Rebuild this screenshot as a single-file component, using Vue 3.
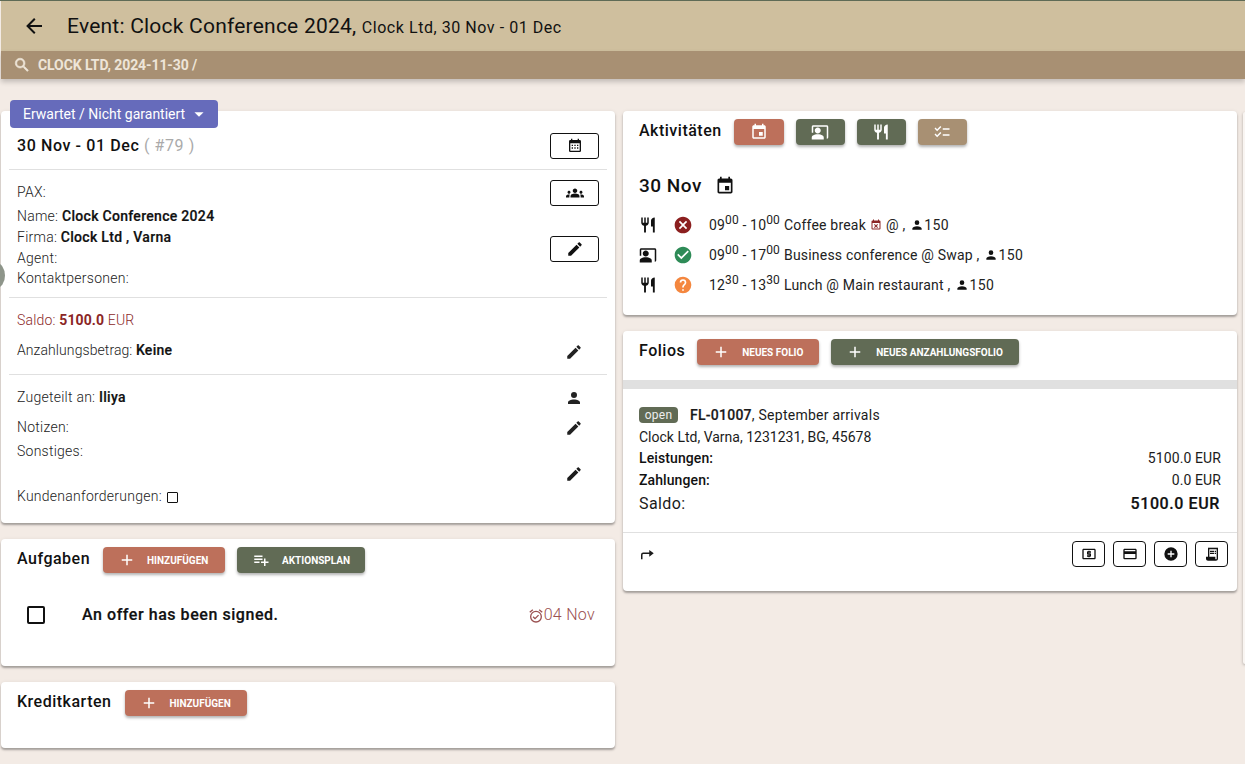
<script setup>
const P = {
  back: 'M20,11V13H8L13.5,18.5L12.08,19.92L4.16,12L12.08,4.08L13.5,5.5L8,11H20Z',
  search: 'M9.5,3A6.5,6.5 0 0,1 16,9.5C16,11.11 15.41,12.59 14.44,13.73L14.71,14H15.5L20.5,19L19,20.5L14,15.5V14.71L13.73,14.44C12.59,15.41 11.11,16 9.5,16A6.5,6.5 0 0,1 3,9.5A6.5,6.5 0 0,1 9.5,3M9.5,5C7,5 5,7 5,9.5C5,12 7,14 9.5,14C12,14 14,12 14,9.5C14,7 12,5 9.5,5Z',
  down: 'M7,10L12,15L17,10H7Z',
  month: 'M19 3h-1V1h-2v2H8V1H6v2H5a2 2 0 0 0-2 2v14a2 2 0 0 0 2 2h14a2 2 0 0 0 2-2V5a2 2 0 0 0-2-2zM5 8h14v11H5zM7 10v2h2v-2zM11 10v2h2v-2zM15 10v2h2v-2zM7 14v2h2v-2zM11 14v2h2v-2zM15 14v2h2v-2z',
  group: 'M4,13c1.1,0,2-0.9,2-2c0-1.1-0.9-2-2-2s-2,0.9-2,2C2,12.1,2.9,13,4,13z M5.13,14.1C4.76,14.04,4.39,14,4,14 c-0.99,0-1.93,0.21-2.78,0.58C0.48,14.9,0,15.62,0,16.43V18l4.5,0v-1.61C4.5,15.56,4.73,14.78,5.13,14.1z M20,13c1.1,0,2-0.9,2-2 c0-1.1-0.9-2-2-2s-2,0.9-2,2C18,12.1,18.9,13,20,13z M24,16.43c0-0.81-0.48-1.53-1.22-1.85C21.93,14.21,20.99,14,20,14 c-0.39,0-0.76,0.04-1.13,0.1c0.4,0.68,0.63,1.46,0.63,2.29V18l4.5,0V16.43z M16.24,13.65c-1.17-0.52-2.61-0.9-4.24-0.9 c-1.63,0-3.07,0.39-4.24,0.9C6.68,14.13,6,15.21,6,16.39V18h12v-1.61C18,15.21,17.32,14.13,16.24,13.65z M12,12c1.66,0,3-1.34,3-3 s-1.34-3-3-3S9,7.34,9,9S10.34,12,12,12z',
  pencil: 'M20.71,7.04C21.1,6.65 21.1,6 20.71,5.63L18.37,3.29C18,2.9 17.35,2.9 16.96,3.29L15.12,5.12L18.87,8.87M3,17.25V21H6.75L17.81,9.93L14.06,6.18L3,17.25Z',
  account: 'M12,4A4,4 0 0,1 16,8A4,4 0 0,1 12,12A4,4 0 0,1 8,8A4,4 0 0,1 12,4M12,14C16.42,14 20,15.79 20,18V20H4V18C4,15.79 7.58,14 12,14Z',
  food: 'M11,9H9V2H7V9H5V2H3V9C3,11.12 4.66,12.84 6.75,12.97V22H9.25V12.97C11.34,12.84 13,11.12 13,9V2H11V9M16,6V14H18.5V22H21V2C18.24,2 16,4.24 16,6Z',
  event: 'M17 12h-5v5h5v-5zM16 1v2H8V1H6v2H5c-1.11 0-1.99.9-1.99 2L3 19c0 1.1.89 2 2 2h14c1.1 0 2-.9 2-2V5c0-1.1-.9-2-2-2h-1V1h-2zm3 18H5V8h14v11z',
  present: 'M21 3H3c-1.1 0-2 .9-2 2v8h2V5h18v16c1.1 0 2-.9 2-2V5c0-1.1-.9-2-2-2zM9 14c2.21 0 4-1.79 4-4s-1.79-4-4-4-4 1.79-4 4 1.79 4 4 4zm6.39 2.56C13.71 15.7 11.53 15 9 15s-4.71.7-6.39 1.56C1.61 17.07 1 18.1 1 19.22V22h16v-2.78c0-1.12-.61-2.15-1.61-2.66z',
  checklist: 'M22 7h-9v2h9V7zm0 8h-9v2h9v-2zM5.54 11 2 7.46l1.41-1.41 2.12 2.12 4.24-4.24 1.41 1.41L5.54 11zm0 8L2 15.46l1.41-1.41 2.12 2.12 4.24-4.24 1.41 1.41L5.54 19z',
  cross: 'M12,2C17.53,2 22,6.47 22,12C22,17.53 17.53,22 12,22C6.47,22 2,17.53 2,12C2,6.47 6.47,2 12,2M15.59,7L12,10.59L8.41,7L7,8.41L10.59,12L7,15.59L8.41,17L12,13.41L15.59,17L17,15.59L13.41,12L17,8.41L15.59,7Z',
  ok: 'M12 2C6.5 2 2 6.5 2 12S6.5 22 12 22 22 17.5 22 12 17.5 2 12 2M10 17L5 12L6.41 10.59L10 14.17L17.59 6.58L19 8L10 17Z',
  help: 'M15.07,11.25L14.17,12.17C13.45,12.89 13,13.5 13,15H11V14.5C11,13.39 11.45,12.39 12.17,11.67L13.41,10.41C13.78,10.05 14,9.55 14,9C14,7.89 13.1,7 12,7A2,2 0 0,0 10,9H8A4,4 0 0,1 12,5A4,4 0 0,1 16,9C16,9.88 15.64,10.67 15.07,11.25M13,19H11V17H13M12,2A10,10 0 0,0 2,12A10,10 0 0,0 12,22A10,10 0 0,0 22,12C22,6.47 17.5,2 12,2Z',
  calx: 'M19 3h-1V1h-2v2H8V1H6v2H5a2 2 0 0 0-2 2v14a2 2 0 0 0 2 2h14a2 2 0 0 0 2-2V5a2 2 0 0 0-2-2zm0 16H5V8h14zM9.41 10 8 11.41 10.59 14 8 16.59 9.41 18 12 15.41 14.59 18 16 16.59 13.41 14 16 11.41 14.59 10 12 12.59z',
  alarm: 'M10.54,14.53L8.41,12.41L7,13.82L10.53,17.35L16.53,11.35L15.12,9.94L10.54,14.53M12,20A7,7 0 0,1 5,13A7,7 0 0,1 12,6A7,7 0 0,1 19,13A7,7 0 0,1 12,20M12,4A9,9 0 0,0 3,13A9,9 0 0,0 12,22A9,9 0 0,0 21,13A9,9 0 0,0 12,4M7.88,3.39L6.6,1.86L2,5.71L3.29,7.24L7.88,3.39M22,5.72L17.4,1.86L16.11,3.39L20.71,7.25L22,5.72Z',
  plus: 'M19,13H13V19H11V13H5V11H11V5H13V11H19V13Z',
  plan: 'M3 16H10V14H3M18 14V10H16V14H12V16H16V20H18V16H22V14M14 6H3V8H14M14 10H3V12H14V10Z',
  turn: 'M15 6.5L21 11l-6 4.5V12H7a1 1 0 0 0-1 1v6H4v-6a3 3 0 0 1 3-3h8z',
  cash: 'M11 17h2v-1h1c.55 0 1-.45 1-1v-3c0-.55-.45-1-1-1h-3v-1h4V8h-2V7h-2v1h-1c-.55 0-1 .45-1 1v3c0 .55.45 1 1 1h3v1H9v2h2v1zm9-13H4c-1.11 0-1.99.89-1.99 2L2 18c0 1.11.89 2 2 2h16c1.11 0 2-.89 2-2V6c0-1.11-.89-2-2-2zm0 14H4V6h16v12z',
  card: 'M20,8H4V6H20M20,18H4V12H20M20,4H4C2.89,4 2,4.89 2,6V18A2,2 0 0,0 4,20H20A2,2 0 0,0 22,18V6C22,4.89 21.1,4 20,4Z',
  pluscircle: 'M17,13H13V17H11V13H7V11H11V7H13V11H17M12,2A10,10 0 0,0 2,12A10,10 0 0,0 12,22A10,10 0 0,0 22,12A10,10 0 0,0 12,2Z',
  receipt: 'M19.5 3.5L18 2l-1.5 1.5L15 2l-1.5 1.5L12 2l-1.5 1.5L9 2 7.5 3.5 6 2v14H3v3c0 1.66 1.34 3 3 3h12c1.66 0 3-1.34 3-3V2l-1.5 1.5zM19 19c0 .55-.45 1-1 1s-1-.45-1-1v-3H8V5h11v14zM9 7h6v2H9zm7 0h2v2h-2zm-7 3h6v2H9zm7 0h2v2h-2z'
}
const activities = [
  { icon: P.food, state: P.cross, color: '#8b1f1f', a: '09', am: '00', b: '10', bm: '00', name: 'Coffee break', cal: true, rest: '@ ,' },
  { icon: P.present, state: P.ok, color: '#2e8b57', a: '09', am: '00', b: '17', bm: '00', name: 'Business conference @ Swap ,', rest: '' },
  { icon: P.food, state: P.help, color: '#f4873f', a: '12', am: '30', b: '13', bm: '30', name: 'Lunch @ Main restaurant ,', rest: '' }
]
const activityButtons = [
  { icon: P.event, cls: 'terra', w: 'w50' },
  { icon: P.present, cls: 'moss', w: 'w49' },
  { icon: P.food, cls: 'moss', w: 'w49' },
  { icon: P.checklist, cls: 'sand', w: 'w49' }
]
const footIcons = [P.cash, P.card, P.pluscircle, P.receipt]
</script>

<template>
  <div class="page">
    <header class="top">
      <svg class="ic ic24 back" viewBox="0 0 24 24"><path :d="P.back" /></svg>
      <h1>Event: Clock Conference 2024, <small>Clock Ltd, 30 Nov - 01 Dec</small></h1>
    </header>
    <div class="crumb">
      <svg class="ic ic18 search" viewBox="0 0 24 24"><path :d="P.search" /></svg>
      <span>CLOCK LTD, 2024-11-30 /</span>
    </div>
    <span class="edge-dot"></span>

    <main class="columns">
      <div class="col">
        <section class="card main-card">
          <button class="status">Erwartet / Nicht garantiert <svg class="ic ic22" viewBox="0 0 24 24"><path :d="P.down" /></svg></button>
          <div class="block date-row">
            <div class="dates">30 Nov - 01 Dec <span>( #79 )</span></div>
            <button class="outline"><svg class="ic ic16" viewBox="0 0 24 24"><path :d="P.month" /></svg></button>
          </div>
          <div class="block info">
            <div class="lines">
              <p class="pax">PAX:</p>
              <p class="name">Name: <b>Clock Conference 2024</b></p>
              <p class="firm">Firma: <b>Clock Ltd , Varna</b></p>
              <p class="agent">Agent:</p>
              <p class="contact">Kontaktpersonen:</p>
            </div>
            <div class="info-actions">
              <button class="outline"><svg class="ic ic18" viewBox="0 0 24 24"><path :d="P.group" /></svg></button>
              <button class="outline"><svg class="ic ic18" viewBox="0 0 24 24"><path :d="P.pencil" /></svg></button>
            </div>
          </div>
          <div class="block money">
            <p class="saldo">Saldo: <b>5100.0</b> EUR</p>
            <div class="line-action"><p class="deposit">Anzahlungsbetrag: <b>Keine</b></p><svg class="ic ic18 low" viewBox="0 0 24 24"><path :d="P.pencil" /></svg></div>
          </div>
          <div class="block assign">
            <div class="line-action h22"><p>Zugeteilt an: <b>Iliya</b></p><svg class="ic ic18 person" viewBox="0 0 24 24"><path :d="P.account" /></svg></div>
            <div class="line-action notes"><p>Notizen:</p><svg class="ic ic18 low1" viewBox="0 0 24 24"><path :d="P.pencil" /></svg></div>
            <p class="misc">Sonstiges:</p>
            <div class="misc-edit"><svg class="ic ic18" viewBox="0 0 24 24"><path :d="P.pencil" /></svg></div>
            <p class="wishes">Kundenanforderungen: <i class="tick"></i></p>
          </div>
        </section>

        <section class="card tasks">
          <div class="head">
            <h2>Aufgaben</h2>
            <button class="btn terra"><svg class="ic ic18" viewBox="0 0 24 24"><path :d="P.plus" /></svg>HINZUFÜGEN</button>
            <button class="btn moss"><svg class="ic ic18" viewBox="0 0 24 24"><path :d="P.plan" /></svg>AKTIONSPLAN</button>
          </div>
          <div class="task">
            <i class="box"></i>
            <b>An offer has been signed.</b>
            <span class="due"><svg class="ic ic16" viewBox="0 0 24 24"><path :d="P.alarm" /></svg>04 Nov</span>
          </div>
        </section>

        <section class="card cards">
          <div class="head">
            <h2>Kreditkarten</h2>
            <button class="btn terra"><svg class="ic ic18" viewBox="0 0 24 24"><path :d="P.plus" /></svg>HINZUFÜGEN</button>
          </div>
        </section>
      </div>

      <div class="col">
        <section class="card activities">
          <div class="head">
            <h2>Aktivitäten</h2>
            <button v-for="(b, i) in activityButtons" :key="i" class="btn square" :class="[b.cls, b.w]"><svg class="ic ic18" viewBox="0 0 24 24"><path :d="b.icon" /></svg></button>
          </div>
          <div class="day">30 Nov <svg class="ic ic20" viewBox="0 0 24 24"><path :d="P.event" /></svg></div>
          <div v-for="(a, i) in activities" :key="i" class="activity">
            <svg class="ic ic18 kind" viewBox="0 0 24 24"><path :d="a.icon" /></svg>
            <svg class="ic ic20 state" viewBox="0 0 24 24" :style="{ fill: a.color }"><path :d="a.state" /></svg>
            <span class="time">{{ a.a }}<sup>{{ a.am }}</sup> - {{ a.b }}<sup>{{ a.bm }}</sup></span>
            <span class="what">{{ a.name }}</span>
            <svg v-if="a.cal" class="ic ic12 calx" viewBox="0 0 24 24"><path :d="P.calx" /></svg>
            <span v-if="a.rest" class="what">{{ a.rest }}</span>
            <svg class="ic ic14 guest" viewBox="0 0 24 24"><path :d="P.account" /></svg><span class="count">150</span>
          </div>
        </section>

        <section class="card folios">
          <div class="head">
            <h2>Folios</h2>
            <button class="btn terra new-folio"><svg class="ic ic18" viewBox="0 0 24 24"><path :d="P.plus" /></svg>NEUES FOLIO</button>
            <button class="btn moss new-deposit"><svg class="ic ic18" viewBox="0 0 24 24"><path :d="P.plus" /></svg>NEUES ANZAHLUNGSFOLIO</button>
          </div>
          <div class="band"></div>
          <div class="folio">
            <p class="fl"><span class="open">open</span><b>FL-01007</b>, September arrivals</p>
            <p class="addr">Clock Ltd, Varna, 1231231, BG, 45678</p>
            <p class="row med first"><span>Leistungen:</span><span>5100.0 EUR</span></p>
            <p class="row med"><span>Zahlungen:</span><span>0.0 EUR</span></p>
            <p class="row total"><span>Saldo:</span><b>5100.0 EUR</b></p>
          </div>
          <div class="foot">
            <svg class="ic ic18" viewBox="0 0 24 24"><path :d="P.turn" /></svg>
            <div class="foot-btns">
              <button v-for="(d, i) in footIcons" :key="i" class="outline small"><svg class="ic ic16" viewBox="0 0 24 24"><path :d="d" /></svg></button>
            </div>
          </div>
        </section>
      </div>
    </main>
    <span class="edge-right"></span>
  </div>
</template>

<style>
html, body { margin: 0; background: #f3ebe5; overflow: hidden; }
</style>

<style scoped>
* { box-sizing: border-box; }
.page { position: relative; width: 1245px; height: 764px; overflow: hidden; padding-left: 1px; background: #f3ebe5; border-top: 1px solid #5f6b56; font-family: Roboto, "Liberation Sans", sans-serif; font-size: 14px; color: #1b1b1b; letter-spacing: .1px; }
p, h1, h2 { margin: 0; font-weight: 400; }
button { font-family: inherit; cursor: pointer; padding: 0; }
b { font-weight: 700; }
.ic { display: block; flex: none; fill: currentColor; }
.ic12 { width: 12px; height: 12px; } .ic14 { width: 14px; height: 14px; } .ic16 { width: 16px; height: 16px; } .ic18 { width: 18px; height: 18px; } .ic20 { width: 20px; height: 20px; } .ic22 { width: 22px; height: 22px; } .ic24 { width: 24px; height: 24px; }

.top { height: 50px; background: #cfbf9e; display: flex; align-items: center; padding-left: 21px; color: #111; }
.back { margin-right: 21px; }
.top h1 { font-size: 21px; letter-spacing: .22px; line-height: 50px; margin-top: 1px; }
.top small { font-size: 16px; letter-spacing: .55px; }
.crumb { height: 28px; background: #a89073; display: flex; align-items: center; padding-left: 12px; gap: 7px; color: #eee5d8; font-size: 14px; font-weight: 700; letter-spacing: -.1px; box-shadow: 0 3px 5px rgba(0,0,0,.2); position: relative; }
.search { stroke: currentColor; stroke-width: .8px; }
.edge-dot { position: absolute; left: -12px; top: 262px; width: 17px; height: 25px; border-radius: 50%; background: #8e958a; z-index: 2; }
.edge-right { position: absolute; right: -2px; top: 111px; width: 4px; height: 552px; border-radius: 4px; background: #f9f5f2; box-shadow: 0 1px 3px rgba(0,0,0,.3); }

.columns { display: flex; gap: 8px; padding-top: 32px; align-items: flex-start; }
.col { width: 614px; display: flex; flex-direction: column; gap: 16px; }
.card { position: relative; background: #fff; border-radius: 4px; box-shadow: 0 2px 2px rgba(0,0,0,.28), 0 1px 4px rgba(0,0,0,.1); }

.head { display: flex; align-items: center; padding: 8px 16px 0; height: 34px; }
h2 { font-size: 16px; font-weight: 500; letter-spacing: .5px; color: #111; line-height: 24px; margin-top: -3px; white-space: nowrap; }
.btn { border: 0; height: 26px; border-radius: 4px; display: inline-flex; align-items: center; color: #fff; font-size: 10px; font-weight: 700; letter-spacing: 0; box-shadow: 0 2px 3px rgba(0,0,0,.3); white-space: nowrap; }
.terra { background: #bd705b; } .moss { background: #616b55; } .sand { background: #a89073; }
.btn .ic { margin: 0 11px 0 15px; }

.main-card { height: 412px; }
.status { position: absolute; left: 9px; top: -11px; width: 208px; height: 28px; border: 0; border-radius: 4px; background: #666bbb; color: #fff; font-size: 14px; letter-spacing: 0; display: flex; align-items: center; padding-left: 13px; gap: 3px; z-index: 1; }
.block { margin: 0 8px; padding: 0 8px; border-bottom: 1px solid #e0e0e0; }
.block:last-child { border-bottom: 0; }
.date-row { height: 59px; display: flex; justify-content: space-between; align-items: flex-start; padding: 22px 8px 0; }
.dates { font-size: 16px; font-weight: 500; letter-spacing: .6px; color: #111; line-height: 26px; }
.dates span { font-weight: 400; color: #aaa; }
.outline { width: 49px; height: 26px; background: #fff; border: 1px solid #111; border-radius: 3px; display: flex; align-items: center; justify-content: center; color: #111; }
.info { height: 128px; display: flex; justify-content: space-between; position: relative; }
.lines p { line-height: 20px; color: #222; font-weight: 300; letter-spacing: .25px; }
.lines b, .money b, .assign b { color: #111; font-weight: 500; letter-spacing: .3px; -webkit-text-stroke: .2px #111; }
.pax { padding-top: 12px; }
.name { padding-top: 4px; } .firm { padding-top: 1px; } .agent { padding-top: 1px; }
.info-actions { padding-top: 10px; display: flex; flex-direction: column; gap: 30px; }
.money { height: 77px; padding-top: 12px; }
.saldo { color: #8b2a2a; line-height: 20px; font-weight: 300; letter-spacing: .2px; }
.money .saldo b { color: #8b2626; -webkit-text-stroke: 0; font-weight: 700; letter-spacing: .1px; }
.line-action { display: flex; justify-content: space-between; align-items: center; padding-right: 16px; color: #222; }
.money .line-action { margin-top: 8px; height: 24px; }
.deposit { font-weight: 300; letter-spacing: .08px; margin-top: -1px; }
.low { margin-top: 3px; }
.low1 { margin-top: 2px; }
.assign { height: 148px; padding-top: 11px; }
.assign p { color: #222; line-height: 20px; font-weight: 300; letter-spacing: .25px; }
.h22 { height: 22px; padding-right: 16px; }
.person { margin-top: 2px; }
.notes { margin-top: 8px; height: 22px; }
.misc { margin-top: 3px; }
.misc-edit { display: flex; justify-content: flex-end; padding-right: 16px; height: 19px; margin-top: 4px; }
.wishes { display: flex; align-items: center; gap: 5px; padding-top: 2px; }
.tick { display: block; width: 11px; height: 11px; border: 1.5px solid #111; border-radius: 1px; margin-top: 2px; }

.tasks { height: 127px; }
.tasks .btn.terra { width: 122px; margin-left: 13px; }
.cards .btn.terra { width: 122px; margin-left: 14px; }
.tasks .btn.moss { width: 128px; margin-left: 12px; }
.tasks .btn.moss .ic { margin: 0 12px 0 15px; }
.task { display: flex; align-items: center; padding: 30px 20px 0 26px; height: 53px; font-size: 16px; }
.box { width: 18px; height: 18px; border: 2px solid #111; border-radius: 2px; margin-right: 37px; }
.task b { font-weight: 500; letter-spacing: .55px; color: #111; -webkit-text-stroke: .2px #111; }
.due { margin-left: auto; display: flex; align-items: center; color: #9a5050; letter-spacing: .3px; font-weight: 300; }
.due .ic { margin-top: 2px; }
.cards { height: 66px; }

.activities { height: 204px; }
.square .ic { margin: 0 auto; }
.w50 { width: 50px; } .w49 { width: 49px; }
.activities .square { margin-left: 12px; }
.day { display: flex; align-items: center; gap: 13px; padding: 29px 16px 0; font-size: 19px; font-weight: 500; letter-spacing: .5px; color: #111; line-height: 24px; }
.activity { display: flex; align-items: center; height: 30px; padding-left: 16px; }
.day + .activity { margin-top: 12px; }
.kind { color: #111; }
.state { margin-left: 16px; margin-right: 16px; }
.time, .what, .count { white-space: pre; letter-spacing: .35px; color: #222; }
.time { letter-spacing: .15px; }
.what { margin-left: 4px; letter-spacing: .2px; }
sup { font-size: 12px; line-height: 0; }
.calx { color: #8b2626; margin-left: 4px; }
.guest { margin-left: 5px; color: #111; }

.folios { height: 260px; }
.folios .btn .ic { margin-right: 12px; }
.new-folio { width: 122px; margin-left: 12px; }
.new-deposit { width: 188px; margin-left: 12px; }
.band { height: 9px; background: #e0e0e0; margin-top: 15px; }
.folio { padding: 15px 16px 0; height: 144px; border-bottom: 1px solid #e0e0e0; }
.folio p { line-height: 22px; color: #1b1b1b; }
.fl { display: flex; align-items: center; letter-spacing: .25px; white-space: pre; }
.addr { letter-spacing: 0; }
.open { background: #616b55; color: #eee; font-size: 12px; border-radius: 4px; height: 16px; width: 39px; display: flex; align-items: center; justify-content: center; margin-right: 12px; }
.fl b { font-weight: 500; -webkit-text-stroke: .2px #111; }
.row { display: flex; justify-content: space-between; }
.first { margin-top: -1px; }
.med span:first-child { font-weight: 500; color: #111; }
.total { font-size: 16px; font-weight: 400; letter-spacing: .4px; height: 24px; line-height: 24px !important; margin-top: 1px; padding-right: 1px; }
.total b { font-weight: 500; letter-spacing: .6px; color: #111; -webkit-text-stroke: .2px #111; }
.foot { display: flex; justify-content: space-between; align-items: flex-start; padding: 8px 9px 0 15px; }
.foot > .ic { margin-top: 4px; }
.foot-btns { display: flex; gap: 8px; }
.small { width: 33px; height: 26px; border-radius: 4px; }
</style>
